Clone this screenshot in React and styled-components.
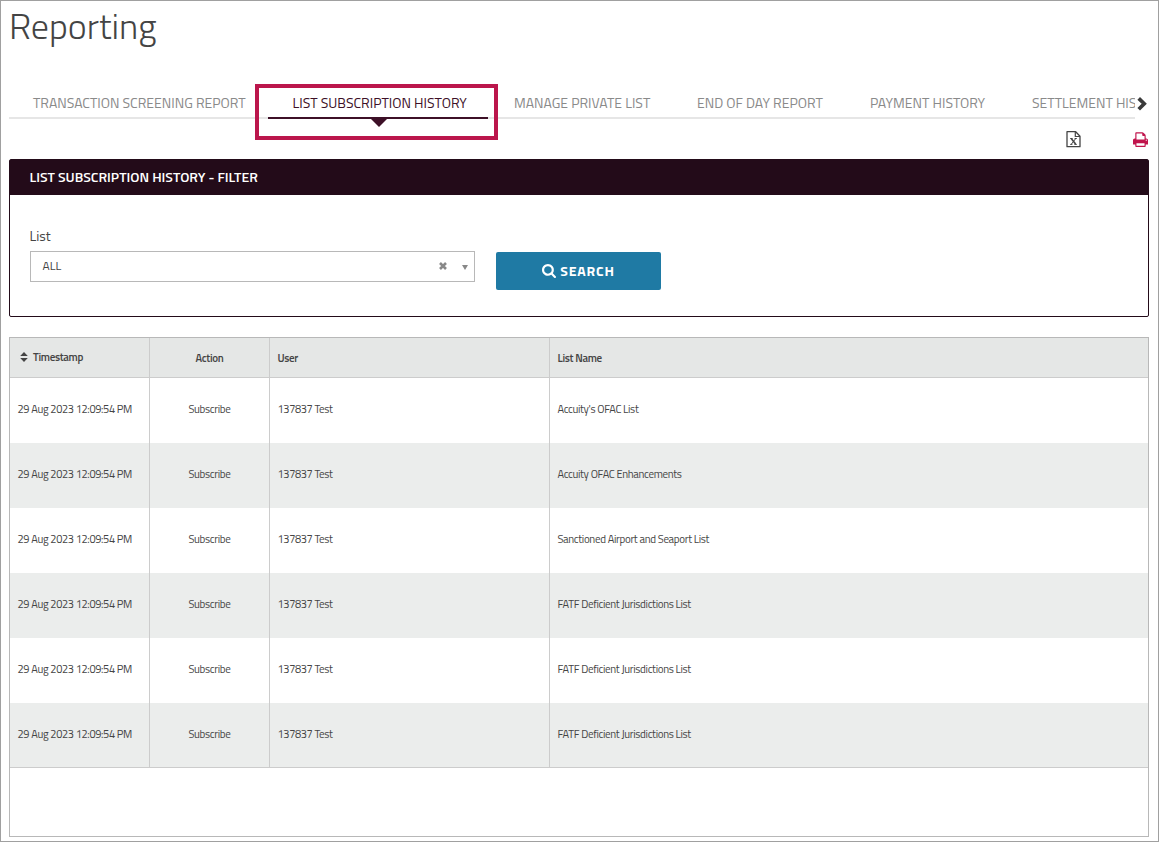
import React, { useState } from "react";
import styled, { createGlobalStyle } from "styled-components";

const tabs = [
  { name: "Transaction Screening Report", width: 259 },
  { name: "List Subscription History", width: 222 },
  { name: "Manage Private List", width: 183 },
  { name: "End of Day Report", width: 173 },
  { name: "Payment History", width: 162 },
  { name: "Settlement History", width: 190 },
];

const lists = [
  "Accuity's OFAC List",
  "Accuity OFAC Enhancements",
  "Sanctioned Airport and Seaport List",
  "FATF Deficient Jurisdictions List",
  "FATF Deficient Jurisdictions List",
  "FATF Deficient Jurisdictions List",
];

const rows = lists.map((list) => ({
  timestamp: "29 Aug 2023 12:09:54 PM",
  action: "Subscribe",
  user: "137837 Test",
  list,
}));

const ChevronIcon = () => (
  <svg width="10" height="14" viewBox="0 0 10 14">
    <path d="M1.7 1.4 7.2 6.8l-5.5 5.4" fill="none" stroke="#3a3a3a" strokeWidth="3.7" />
  </svg>
);

const ExcelIcon = () => (
  <svg width="15" height="17" viewBox="0 0 15 17" fill="none" stroke="#444">
    <path d="M1 .7h8.7L14 5.2v10.5H1z" strokeWidth="1.3" strokeLinejoin="round" />
    <path d="M9.3.8v4.7H14" strokeWidth="1.2" />
    <path d="M5.4 7.7l4.2 5.4" strokeWidth="1.6" />
    <path d="M9.6 7.7l-4.2 5.4M4.2 7.5h2.4M8.6 7.5h2.2M4.2 13.4h2.2M8.4 13.4h2.4" strokeWidth="1" />
  </svg>
);

const PrintIcon = () => (
  <svg width="15" height="16" viewBox="64 0 1664 1664" preserveAspectRatio="none" fill="#c0144c">
    <path d="M448 1536h896v-256h-896v256zm0-640h896v-384h-160q-40 0-68-28t-28-68v-160h-640v640zm1152 64q0-26-19-45t-45-19-45 19-19 45 19 45 45 19 45-19 19-45zm128 0v416q0 13-9.5 22.5t-22.5 9.5h-224v160q0 40-28 68t-68 28h-960q-40 0-68-28t-28-68v-160h-224q-13 0-22.5-9.5t-9.5-22.5v-416q0-79 56.5-135.5t135.5-56.5h64v-544q0-40 28-68t68-28h672q40 0 88 20t76 48l152 152q28 28 48 76t20 88v256h64q79 0 135.5 56.5t56.5 135.5z" />
  </svg>
);

const SearchIcon = () => (
  <svg width="14" height="14" viewBox="64 128 1664 1664" fill="#fff">
    <path d="M1216 832q0-185-131.5-316.5t-316.5-131.5-316.5 131.5-131.5 316.5 131.5 316.5 316.5 131.5 316.5-131.5 131.5-316.5zm512 832q0 52-38 90t-90 38q-54 0-90-38l-343-342q-179 124-399 124-143 0-273.5-55.5t-225-150-150-225-55.5-273.5 55.5-273.5 150-225 225-150 273.5-55.5 273.5 55.5 225 150 150 225 55.5 273.5q0 220-124 399l343 343q37 37 37 90z" />
  </svg>
);

const ClearIcon = () => (
  <svg width="8" height="8" viewBox="0 0 8 8">
    <path d="M1 1l6 6M7 1 1 7" stroke="#888" strokeWidth="2.6" />
  </svg>
);

const CaretIcon = () => (
  <svg width="6" height="5" viewBox="0 0 6 5">
    <path d="M0 0h6L3 5z" fill="#888" />
  </svg>
);

const SortIcon = () => (
  <svg width="8" height="10" viewBox="0 0 8 10">
    <path d="M4 0l3.8 4H.2zM4 10L.2 6h7.6z" fill="#444" />
  </svg>
);

const App = () => {
  const [active, setActive] = useState(1);

  return (
    <>
      <GlobalStyle />
      <Page>
        <Title>Reporting</Title>
        <TabBar>
          <TabList>
            {tabs.map(({ name, width }, index) => (
              <Tab
                key={name}
                $width={width}
                $active={active === index}
                onClick={() => setActive(index)}
              >
                {name}
                {active === index && <Highlight />}
              </Tab>
            ))}
          </TabList>
          <NextButton>
            <ChevronIcon />
          </NextButton>
        </TabBar>

        <Actions>
          <ExcelIcon />
          <PrintIcon />
        </Actions>

        <Filter>
          <FilterHeader>List Subscription History - Filter</FilterHeader>
          <FilterBody>
            <Field>
              <Label>List</Label>
              <Select>
                <Value>ALL</Value>
                <ClearIcon />
                <CaretWrap>
                  <CaretIcon />
                </CaretWrap>
              </Select>
            </Field>
            <SearchButton>
              <SearchIcon />
              Search
            </SearchButton>
          </FilterBody>
        </Filter>

        <Grid>
          <HeaderRow>
            <HeaderCell $sortable>
              <SortIcon />
              Timestamp
            </HeaderCell>
            <HeaderCell $center>Action</HeaderCell>
            <HeaderCell>User</HeaderCell>
            <HeaderCell>List Name</HeaderCell>
          </HeaderRow>
          {rows.map(({ timestamp, action, user, list }, index) => (
            <Row key={index}>
              <Cell>{timestamp}</Cell>
              <Cell $center>{action}</Cell>
              <Cell>{user}</Cell>
              <Cell>{list}</Cell>
            </Row>
          ))}
        </Grid>
      </Page>
    </>
  );
};

const GlobalStyle = createGlobalStyle`
  * {
    box-sizing: border-box;
  }
  body {
    margin: 0;
    background: #fff;
    color: #444;
    font-family: "Titillium Web", "Open Sans", sans-serif;
  }
  svg {
    display: block;
    flex: none;
  }
`;

const Page = styled.main`
  display: flex;
  flex-direction: column;
  width: 1159px;
  height: 842px;
  padding: 0 9px 4px 8px;
  border: 1px solid #a0a0a0;
`;

const Title = styled.h1`
  height: 88px;
  margin: 0;
  font-size: 36px;
  font-weight: 300;
  line-height: 50px;
`;

const TabBar = styled.nav`
  display: flex;
  height: 30px;
`;

/* the last tab is cut at the right edge, the marker may hang out below */
const TabList = styled.div`
  display: flex;
  width: 1126px;
  height: 50px;
  background: linear-gradient(#e6e6e6, #e6e6e6) 0 28px / 100% 2px no-repeat;
  clip-path: inset(-10px 0 -10px 0);
`;

const Tab = styled.div`
  position: relative;
  flex: 0 0 ${(p) => p.$width}px;
  height: 30px;
  padding-left: ${(p) => (p.$active ? 24.5 : 24)}px;
  color: ${(p) => (p.$active ? "#3d1027" : "#8a8a8a")};
  font-size: 14px;
  line-height: 28px;
  text-transform: uppercase;
  white-space: nowrap;
  cursor: pointer;
  ${(p) =>
    p.$active &&
    `
    background: linear-gradient(#3d1027, #3d1027) 0 28px / 220px 2px no-repeat;
    &::after {
      content: "";
      position: absolute;
      top: 30px;
      left: 103px;
      border: 8px solid transparent;
      border-top-color: #3d1027;
      border-bottom: 0;
    }
  `}
`;

const Highlight = styled.span`
  position: absolute;
  top: -5px;
  left: -13px;
  width: 243px;
  height: 56px;
  border: 4px solid #bb164c;
`;

const NextButton = styled.div`
  padding: 8px 0 0 2px;
`;

const Actions = styled.div`
  display: flex;
  justify-content: flex-end;
  gap: 52px;
  height: 40px;
  padding: 12px 1px 0 0;
`;

const Filter = styled.section`
  height: 158px;
  border: 1px solid #230b19;
  border-radius: 2px;
`;

const FilterHeader = styled.h2`
  height: 35px;
  margin: 0;
  padding-left: 19.5px;
  background: #230b19;
  color: #fff;
  font-size: 14px;
  font-weight: 600;
  line-height: 34px;
  text-transform: uppercase;
`;

const FilterBody = styled.div`
  display: flex;
  gap: 21px;
  padding: 31px 20px 0;
`;

const Field = styled.div`
  width: 445px;
`;

const Label = styled.div`
  height: 25px;
  margin-left: -0.5px;
  font-size: 14px;
  line-height: 19px;
`;

const Select = styled.div`
  display: flex;
  align-items: center;
  height: 31px;
  padding: 0 6px 1px 11.5px;
  border: 1px solid #b8b8b8;
`;

const Value = styled.span`
  flex: 1;
  font-size: 12px;
  line-height: 28px;
`;

const CaretWrap = styled.span`
  margin: 3px 0 0 15px;
`;

const SearchButton = styled.button`
  display: flex;
  align-items: center;
  justify-content: center;
  gap: 4px;
  width: 165px;
  height: 38px;
  margin-top: 26px;
  padding: 0 0 1px;
  border: 0;
  border-radius: 2px;
  background: #1f7aa4;
  color: #fff;
  font: 700 14px "Titillium Web", "Open Sans", sans-serif;
  letter-spacing: 0.8px;
  text-transform: uppercase;
`;

const Grid = styled.section`
  flex: 1;
  margin-top: 20px;
  border: 1px solid #b8b8b8;
  font-size: 11px;
  letter-spacing: -0.34px;
`;

const Row = styled.div`
  display: grid;
  grid-template-columns: 140px 120px 280px 1fr;
  height: 65px;
  background: #fff;
  &:nth-child(odd) {
    background: #ebedec;
  }
  &:last-child {
    border-bottom: 1px solid #ccc;
  }
`;

const HeaderRow = styled(Row)`
  height: 40px;
  &:nth-child(odd) {
    border-bottom: 1px solid #ccc;
    background: #e5e7e6;
  }
`;

const Cell = styled.div`
  display: flex;
  align-items: center;
  justify-content: ${(p) => (p.$center ? "center" : "flex-start")};
  padding: 0 7.5px 3px;
  border-right: 1px solid #ccc;
  white-space: nowrap;
  &:last-child {
    border-right: 0;
  }
`;

const HeaderCell = styled(Cell)`
  gap: 5px;
  padding: ${(p) => (p.$sortable ? "0 10px 1px" : "1px 7.5px 0")};
  font-weight: 600;
`;

export default App;
